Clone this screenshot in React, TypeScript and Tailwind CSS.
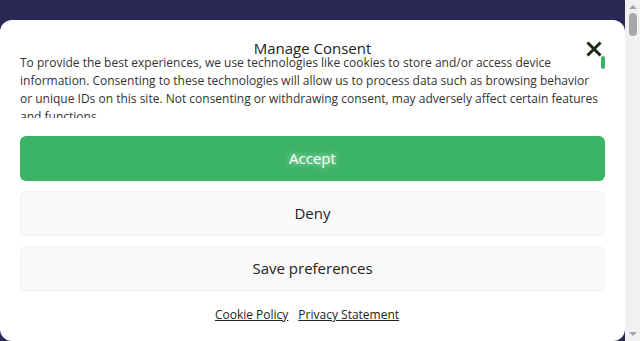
import React from "react";

export default function App() {
  return (
    <div className="w-[640px] h-[341px] overflow-hidden flex bg-[#2a2955]" style={{ fontFamily: '"Open Sans", sans-serif' }}>
      <div className="flex-1 pt-[20px]">
        <div className="relative h-[321px] bg-white rounded-[12px] px-[20px] pt-[20px]">
          <div className="h-[16px] flex items-center justify-center text-[15px] leading-[16px] text-[#222]">Manage Consent</div>
          <button className="absolute left-[586px] top-[21px] w-[16px] h-[16px] flex items-center justify-center">
            <svg width="16" height="16" viewBox="0 0 16 16">
              <path d="M2.5 2.5 L13.5 13.5 M13.5 2.5 L2.5 13.5" stroke="#1e2a14" strokeWidth="3" strokeLinecap="square" />
            </svg>
          </button>
          <div className="absolute left-[601px] top-[36px] w-[4px] h-[13px] rounded-[2px] bg-[#3bb465]" />
          <div className="h-[64px] overflow-hidden whitespace-nowrap text-[12px] leading-[18px] text-[#333] mt-[-2px]">
            To provide the best experiences, we use technologies like cookies to store and/or access device
            <br />
            information. Consenting to these technologies will allow us to process data such as browsing behavior
            <br />
            or unique IDs on this site. Not consenting or withdrawing consent, may adversely affect certain features
            <br />
            and functions.
          </div>
          <div className="flex flex-col gap-[10px] mt-[18px]">
            <button className="h-[45px] w-full rounded-[6px] bg-[#3bb465] text-white text-[15px] [text-shadow:0_0_6px_rgba(255,255,255,0.9)]">Accept</button>
            <button className="h-[45px] w-full rounded-[6px] bg-[#f9f9f9] border border-[#f2f2f2] text-[#222] text-[15px]">Deny</button>
            <button className="h-[45px] w-full rounded-[6px] bg-[#f9f9f9] border border-[#f2f2f2] text-[#222] text-[15px]">Save preferences</button>
          </div>
          <div className="flex justify-center gap-[10px] mt-[16px] pr-[11px] text-[12px] leading-[16px] text-[#222]">
            <a className="underline">Cookie Policy</a>
            <a className="underline">Privacy Statement</a>
          </div>
        </div>
      </div>
      <div className="w-[15px] h-full bg-[#f1f1f1] flex flex-col items-center justify-between py-[5px]">
        <div className="flex flex-col items-center gap-[4px]">
          <div className="w-0 h-0 border-l-[4px] border-r-[4px] border-b-[4px] border-l-transparent border-r-transparent border-b-[#a3a3a3]" />
          <div className="w-[8px] h-[23px] rounded-[4px] bg-[#a8a8a8]" />
        </div>
        <div className="w-0 h-0 border-l-[4px] border-r-[4px] border-t-[4px] border-l-transparent border-r-transparent border-t-[#a3a3a3]" />
      </div>
    </div>
  );
}
